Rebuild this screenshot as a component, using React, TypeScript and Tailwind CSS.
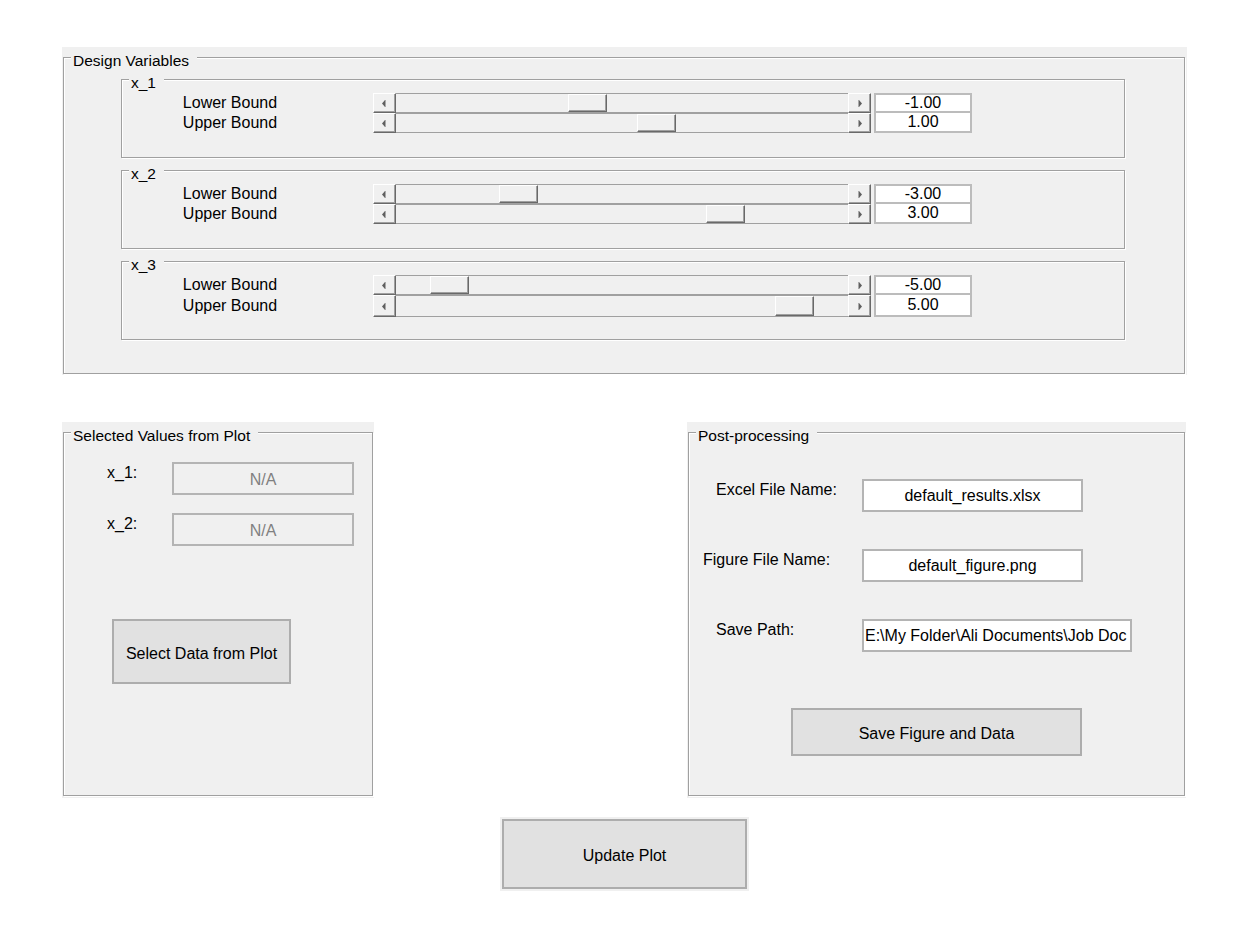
import type { ReactNode } from "react";

type DesignVar = { name: string; lower: number; upper: number; rowHeights: [number, number] };

const designVars: DesignVar[] = [
  { name: "x_1", lower: -1, upper: 1, rowHeights: [20, 20] },
  { name: "x_2", lower: -3, upper: 3, rowHeights: [20, 20] },
  { name: "x_3", lower: -5, upper: 5, rowHeights: [20, 22] },
];

const postRows = [
  { label: "Excel File Name:", indent: "pl-[27px]", value: "default_results.xlsx", width: "w-[221px]", centered: true },
  { label: "Figure File Name:", indent: "pl-[14px]", value: "default_figure.png", width: "w-[221px]", centered: true },
  { label: "Save Path:", indent: "pl-[27px]", value: "E:\\My Folder\\Ali Documents\\Job Doc", width: "w-[270px]", centered: false },
];

// sliders run from -6 to 6
const SLIDER_MIN = -6;
const SLIDER_MAX = 6;
const TRACK_W = 452;
const THUMB_W = 39;

const raised =
  "border border-t-white border-l-white border-r-[#696969] border-b-[#696969] bg-[#f0f0f0] shadow-[inset_-1px_-1px_0_#a0a0a0]";

function Group({ title, className, children }: { title: string; className?: string; children?: ReactNode }) {
  return (
    <fieldset
      className={`m-0 min-w-0 border border-[#a0a0a0] p-0 shadow-[inset_1px_1px_0_#ffffff,1px_1px_0_#ffffff] ${className ?? ""}`}
    >
      <legend className="ml-[7px] bg-[#f0f0f0] pt-[8px] pr-[8px] pl-[2px] text-[15.5px] leading-[12px]">
        {title}
      </legend>
      {children}
    </fieldset>
  );
}

function Panel({ title, className, children }: { title: string; className: string; children?: ReactNode }) {
  return (
    <div className={`bg-[#f0f0f0] ${className}`}>
      <Group title={title} className="h-full">
        {children}
      </Group>
    </div>
  );
}

function ArrowButton({ dir }: { dir: "left" | "right" }) {
  return (
    <div className={`flex h-full w-[23px] shrink-0 items-center justify-center ${raised}`}>
      <svg width="5" height="7" viewBox="0 0 5 7">
        {dir === "left" ? (
          <>
            <path d="M3 0V7L0 3.5Z" fill="#5f5f5f" />
            <rect x="3" y="0" width="1" height="7" fill="#a8a8a8" />
          </>
        ) : (
          <>
            <rect x="1" y="0" width="1" height="7" fill="#a8a8a8" />
            <path d="M2 0V7L5 3.5Z" fill="#5f5f5f" />
          </>
        )}
      </svg>
    </div>
  );
}

function Slider({ value }: { value: number }) {
  const left = ((value - SLIDER_MIN) / (SLIDER_MAX - SLIDER_MIN)) * (TRACK_W - THUMB_W);
  return (
    <div className="flex h-full w-[498px] shrink-0">
      <ArrowButton dir="left" />
      <div className="relative h-full flex-1 border-y border-[#a0a0a0] bg-[#f0f0f0]">
        <div className={`absolute top-0 bottom-0 w-[39px] ${raised}`} style={{ left }} />
      </div>
      <ArrowButton dir="right" />
    </div>
  );
}

function BoundRow({ label, value, height, first }: { label: string; value: number; height: number; first: boolean }) {
  return (
    <div className="flex items-center" style={{ height }}>
      <div className="ml-[37px] w-[142px] text-center leading-[18px]">{label}</div>
      <div className="ml-[72px] h-full">
        <Slider value={value} />
      </div>
      <div
        className={`ml-[3px] flex h-full w-[98px] items-center justify-center border-2 border-[#bcbcbc] bg-white ${
          first ? "" : "border-t-0"
        }`}
      >
        {value.toFixed(2)}
      </div>
    </div>
  );
}

function Button({ label, className }: { label: string; className: string }) {
  return (
    <button
      type="button"
      className={`flex items-center justify-center border-2 border-[#adadad] bg-[#e1e1e1] pt-[4px] text-[16px] text-black ${className}`}
    >
      {label}
    </button>
  );
}

export default function App() {
  return (
    <div className="h-[938px] w-[1250px] overflow-hidden bg-white font-['Liberation_Sans',Arial,sans-serif] text-[16px] text-black">
      <Panel title="Design Variables" className="mt-[47px] ml-[62px] h-[328px] w-[1125px] pr-[2px] pb-[1px] pl-px">
        <div className="mt-[2px] ml-[57px] flex flex-col gap-[2px]">
          {designVars.map((v) => (
            <Group key={v.name} title={v.name} className="h-[89px] w-[1004px]">
              <div className="pt-[4px]">
                <BoundRow label="Lower Bound" value={v.lower} height={v.rowHeights[0]} first />
                <BoundRow label="Upper Bound" value={v.upper} height={v.rowHeights[1]} first={false} />
              </div>
            </Group>
          ))}
        </div>
      </Panel>

      <div className="mt-[47px] ml-[62px] flex gap-[313px]">
        <Panel title="Selected Values from Plot" className="h-[376px] w-[312px] pr-px pb-[2px] pl-px">
          <div className="mt-[20px] flex flex-col gap-[18px]">
            {["x_1:", "x_2:"].map((name) => (
              <div key={name} className="flex items-start">
                <div className="ml-[43px] w-[65px] pt-[2px] leading-[18px]">{name}</div>
                <div className="flex h-[33px] w-[182px] items-center justify-center border-2 border-[#b4b4b4] bg-[#f0f0f0] pt-[2px] text-[#808080]">
                  N/A
                </div>
              </div>
            ))}
          </div>
          <Button label="Select Data from Plot" className="mt-[73px] ml-[48px] h-[65px] w-[179px]" />
        </Panel>

        <Panel title="Post-processing" className="h-[376px] w-[499px] pr-px pb-[2px] pl-px">
          <div className="mt-[37px] flex flex-col gap-[37px]">
            {postRows.map((row) => (
              <div key={row.label} className="flex items-start">
                <div className={`w-[173px] pt-[2px] leading-[18px] ${row.indent}`}>{row.label}</div>
                <div
                  className={`flex h-[33px] items-center overflow-hidden border-2 border-[#b4b4b4] bg-white whitespace-nowrap ${row.width} ${
                    row.centered ? "justify-center" : "pl-[1px]"
                  }`}
                >
                  {row.value}
                </div>
              </div>
            ))}
          </div>
          <Button label="Save Figure and Data" className="mt-[56px] ml-[102px] h-[48px] w-[291px]" />
        </Panel>
      </div>

      <div className="mt-[19px] ml-[500px] h-[74px] w-[249px] bg-[#f0f0f0] p-[2px]">
        <Button label="Update Plot" className="h-full w-full" />
      </div>
    </div>
  );
}
